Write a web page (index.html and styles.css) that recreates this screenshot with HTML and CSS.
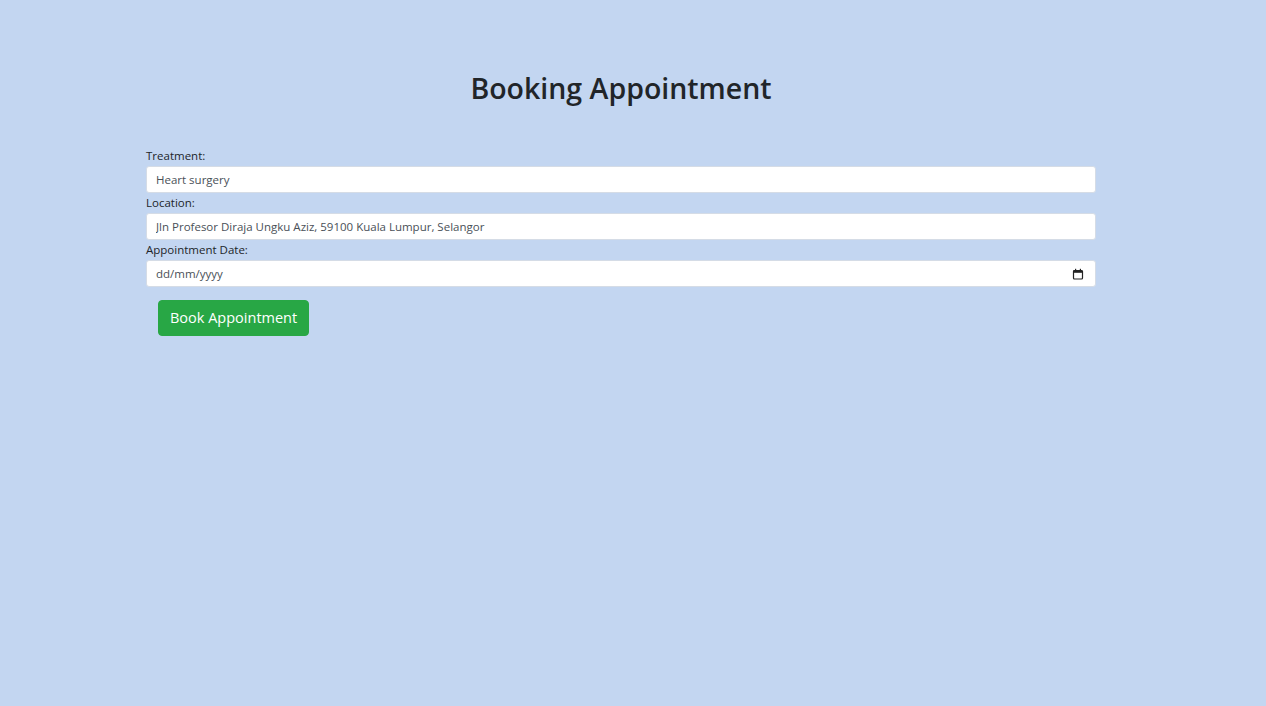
FILE: index.html
```html
<!DOCTYPE html>
<html>
<head>
<meta charset="utf-8">
<link rel="stylesheet" href="styles.css">
</head>
<body>
<div class="page">
  <h1 class="title">Booking Appointment</h1>
  <form class="form">
    <label class="label" for="t">Treatment:</label>
    <input class="input" id="t" type="text" value="Heart surgery">
    <label class="label" for="l">Location:</label>
    <input class="input" id="l" type="text" value="Jln Profesor Diraja Ungku Aziz, 59100 Kuala Lumpur, Selangor">
    <label class="label" for="d">Appointment Date:</label>
    <div class="input date">
      <span class="ph">dd/mm/yyyy</span>
      <svg class="cal" width="12" height="12" viewBox="0 0 12 12"><rect x="1.5" y="2.5" width="9" height="8.5" rx="1" fill="none" stroke="#222" stroke-width="1.2"/><rect x="1.5" y="2.5" width="9" height="2.3" fill="#222"/><rect x="3" y="0.8" width="1.2" height="2" fill="#222"/><rect x="7.8" y="0.8" width="1.2" height="2" fill="#222"/></svg>
    </div>
    <button class="btn" type="button">Book Appointment</button>
  </form>
</div>
</body>
</html>
```
FILE: styles.css
```css
html, body {
  margin: 0;
  padding: 0;
}
body {
  background: #c3d6f1;
  font-family: "Open Sans", "Noto Sans", sans-serif;
  color: #212529;
  height: 706px;
}
.page {
  width: 950px;
  margin-left: 146px;
  padding-top: 68px;
}
.title {
  margin: 0;
  text-align: center;
  font-size: 28.5px;
  font-weight: 600;
  line-height: 40px;
  color: #212529;
  height: 78px;
}
.form {
  display: flex;
  flex-direction: column;
  align-items: flex-start;
}
.label {
  font-size: 11.5px;
  line-height: 20px;
  height: 20px;
  color: #212529;
}
.input {
  box-sizing: border-box;
  width: 950px;
  height: 27px;
  border: 1px solid #d5dce6;
  border-radius: 3px;
  background: #fff;
  padding: 0 9px;
  font-family: inherit;
  font-size: 11.5px;
  color: #495057;
  outline: none;
}
.date {
  display: flex;
  align-items: center;
  justify-content: space-between;
  padding-right: 11px;
}
.ph {
  color: #495057;
}
.cal {
  display: block;
}
.btn {
  margin-top: 13px;
  margin-left: 12px;
  height: 36px;
  padding: 0 11px;
  background: #28a745;
  border: 1px solid #28a745;
  border-radius: 4px;
  color: #fff;
  font-family: inherit;
  font-size: 14.5px;
  line-height: 34px;
}
```
